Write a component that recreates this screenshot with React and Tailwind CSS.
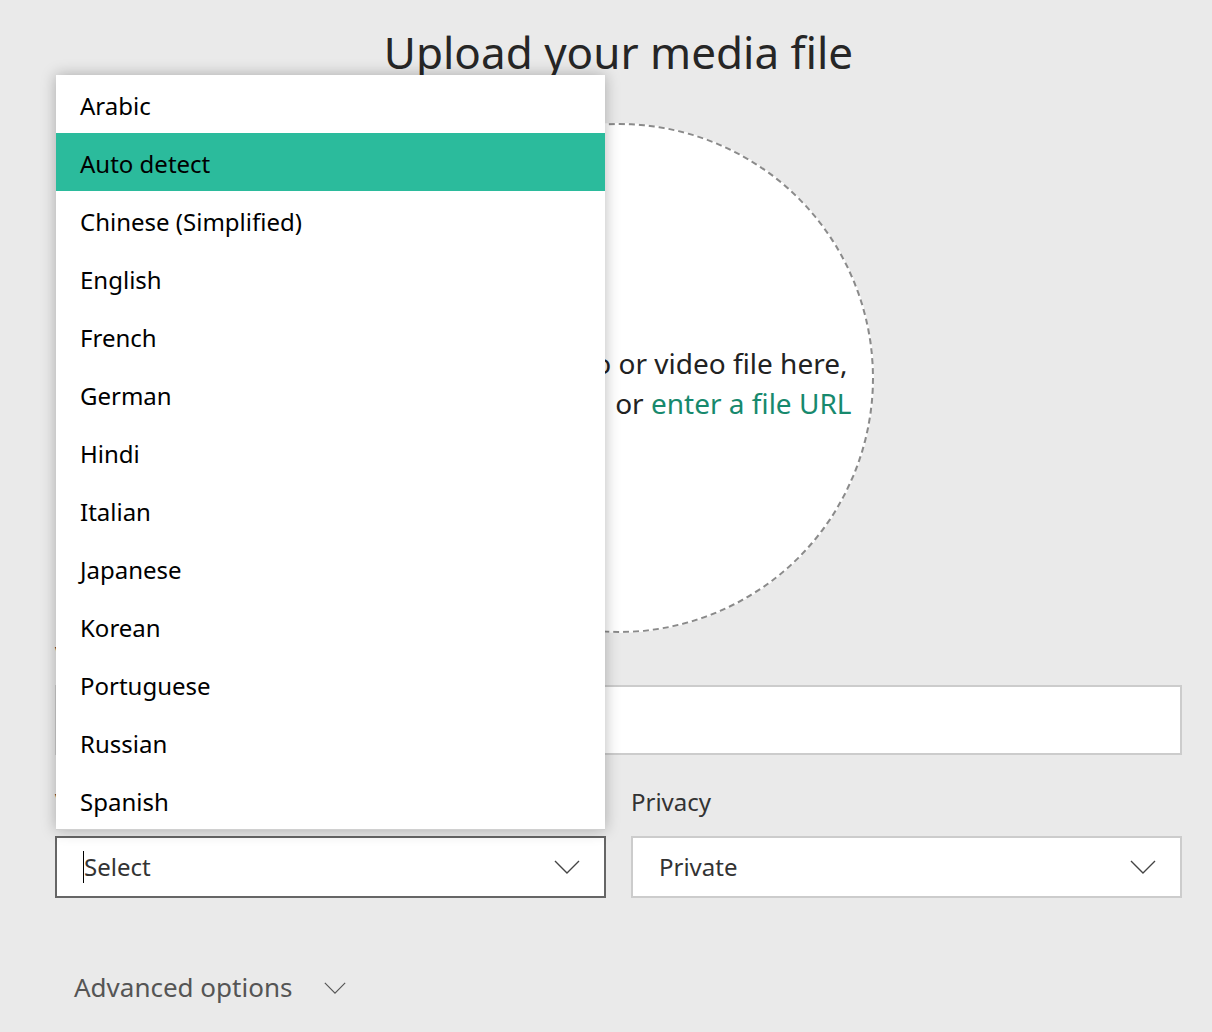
import { useState } from 'react';

const LANGUAGES = [
  'Arabic',
  'Auto detect',
  'Chinese (Simplified)',
  'English',
  'French',
  'German',
  'Hindi',
  'Italian',
  'Japanese',
  'Korean',
  'Portuguese',
  'Russian',
  'Spanish',
];

const Chevron = ({ className = '' }) => (
  <svg width="26" height="14" viewBox="0 0 26 14" fill="none" className={className}>
    <polyline points="1,1 13,13 25,1" stroke="currentColor" strokeWidth="1.4" />
  </svg>
);

const App = () => {
  const [active] = useState('Auto detect');

  return (
    <div
      className="min-h-[1032px] bg-[#eaeaea] text-[#222] pl-[55px] pr-[30px]"
      style={{ fontFamily: '"Noto Sans", "Open Sans", sans-serif' }}
    >
      {/* Titel */}
      <h1 className="pt-[22px] text-center text-[44px] leading-[60px] font-normal text-[#262626]">
        Upload your media file
      </h1>

      {/* Drop zone */}
      <div className="mt-[41px] flex justify-center">
        <div className="w-[510px] h-[510px] rounded-full bg-white border-2 border-dashed border-[#8a8a8a] flex flex-col items-end justify-center pr-[20px] pt-[10px] text-[28px] leading-[40px] whitespace-nowrap">
          <p className="pr-[4px]">Drag and drop an audio or video file here,</p>
          <p>
            or <span className="text-[#17896d]">enter a file URL</span>
          </p>
        </div>
      </div>

      {/* Nama */}
      <div className="mt-[6px]">
        <label className="block text-[23px] leading-[32px] text-[#333]">Video name</label>
        <div className="mt-[14px] h-[70px] bg-white border-2 border-[#cccccc]"></div>
      </div>

      {/* Bahasa & Privasi */}
      <div className="mt-[31px] grid grid-cols-2 gap-[25px]">
        <div>
          <label className="block text-[23px] leading-[32px] text-[#333]">Video source language</label>
          <div className="relative mt-[18px]">
            {/* Dropdown terbuka */}
            <ul className="absolute left-px right-px bottom-[calc(100%+6px)] z-10 bg-white border-b border-[#d0d0d0] shadow-[0_0_14px_rgba(0,0,0,0.28)]">
              {LANGUAGES.map((lang) => (
                <li
                  key={lang}
                  className={`h-[58px] flex items-center pl-[24px] pt-[3px] text-[24px] text-black ${
                    lang === active ? 'bg-[#2bbb9c]' : ''
                  }`}
                >
                  {lang}
                </li>
              ))}
            </ul>
            <div className="h-[62px] bg-white border-2 border-[#666666] flex items-center justify-between pl-[26px] pr-[24px]">
              <div className="flex items-center">
                <span className="w-px h-[32px] bg-black"></span>
                <span className="text-[24px] text-[#333]">Select</span>
              </div>
              <Chevron className="text-[#444]" />
            </div>
          </div>
        </div>
        <div>
          <label className="block text-[24px] leading-[32px] text-[#333]">Privacy</label>
          <div className="mt-[18px] h-[62px] bg-white border-2 border-[#cccccc] flex items-center justify-between pl-[26px] pr-[24px]">
            <span className="text-[24px] text-[#333]">Private</span>
            <Chevron className="text-[#444]" />
          </div>
        </div>
      </div>

      {/* Opsi lanjutan */}
      <button className="mt-[70px] ml-[19px] flex items-center gap-[32px] text-[26px] text-[#555]">
        Advanced options
        <Chevron className="text-[#555] w-[22px]" />
      </button>
    </div>
  );
};

export default App;
